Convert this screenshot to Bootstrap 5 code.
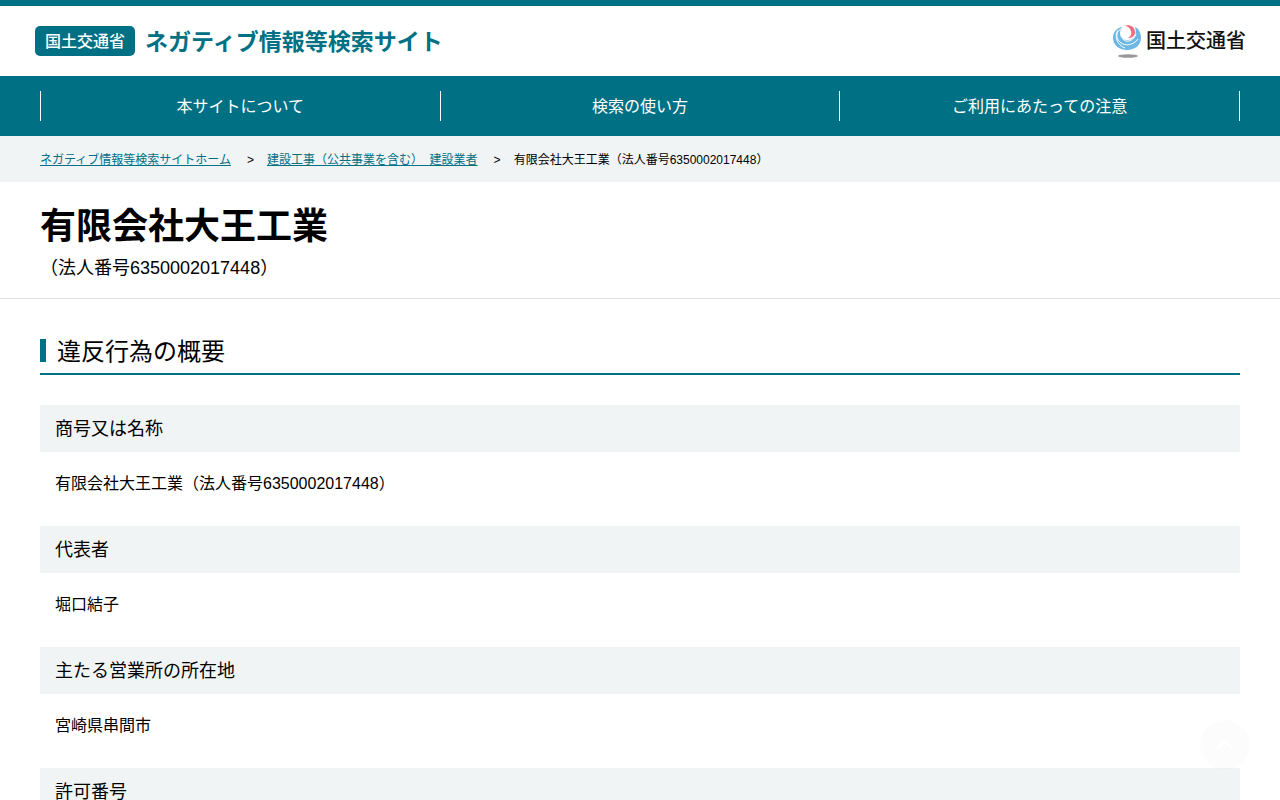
<!DOCTYPE html>
<html lang="ja">
<head>
<meta charset="utf-8">
<meta name="viewport" content="width=device-width, initial-scale=1">
<title>有限会社大王工業 | ネガティブ情報等検索サイト</title>
<link rel="stylesheet" href="https://cdn.jsdelivr.net/npm/bootstrap@5.3.0/dist/css/bootstrap.min.css">
<style>
  :root { --teal: #007085; --pale: #f0f4f5; }
  body { font-family: "Liberation Sans", "Noto Sans CJK JP", sans-serif; color: #000; background: #fff; line-height: 1.5; }
  .site-head { border-top: 6px solid var(--teal); min-height: 76px; padding: 0 35px; }
  .site-name { color: var(--teal); font-family: "Noto Sans CJK JP", sans-serif; font-size: 23px; font-weight: 700; line-height: 28px; gap: 10px; }
  .site-name:hover { color: var(--teal); }
  .site-name .title-text { padding-bottom: 3px; }
  .ministry { background: var(--teal); color: #fff; border-radius: 5px; font-size: 16px; font-weight: 500; padding: 0 10px 2px; }
  .ministry-logo { color: #111; font-family: "Noto Sans CJK JP", sans-serif; font-size: 20px; font-weight: 500; line-height: 28px; gap: 4px; margin-right: -1px; }
  .ministry-logo .logo-text { padding-bottom: 2px; }
  .page-wrap { padding-left: 40px; padding-right: 40px; }
  .site-nav { background: var(--teal); padding-top: 15px; padding-bottom: 15px; }
  .site-nav .nav-item { border-left: 1px solid #fff; }
  .site-nav .nav-item:last-child { border-right: 1px solid #fff; }
  .site-nav .nav-link { color: #fff; line-height: 28px; padding: 2px 0 0; }
  .crumbs { background: var(--pale); padding-top: 15px; padding-bottom: 13px; font-size: 12px; line-height: 18px; }
  .crumbs a { color: var(--teal); }
  .crumbs .sep { margin: 0 13px 0 16px; }
  .page-title { border-bottom: 1px solid #dde3e3; padding-top: 18px; padding-bottom: 16px; }
  .page-title h1 { font-size: 36px; font-weight: 700; line-height: 54px; }
  .page-title p { font-size: 18px; line-height: 28px; }
  .section-title { border-bottom: 2px solid var(--teal); font-size: 24px; font-weight: 400; line-height: 34px; padding: 2px 0 4px; gap: 11px; margin: 34px 0 30px; }
  .section-title::before { content: ""; width: 6px; height: 23px; background: var(--teal); margin-bottom: 3px; }
  .facts dt { background: var(--pale); font-size: 18px; font-weight: 400; line-height: 27px; padding: 11px 15px 9px; }
  .facts dd { font-size: 16px; line-height: 24px; padding: 20px 15px 0; margin-bottom: 30px; }
  .to-top { right: 30px; bottom: 30px; width: 50px; height: 50px; background: rgba(0, 0, 0, .01); }
</style>
</head>
<body>
<header>
  <div class="site-head d-flex align-items-center justify-content-between">
    <a href="#" class="site-name d-flex align-items-center text-decoration-none"><span class="ministry">国土交通省</span><span class="title-text">ネガティブ情報等検索サイト</span></a>
    <a href="#" class="ministry-logo d-flex align-items-center text-decoration-none">
      <svg width="30" height="34" viewBox="0 0 30 34" aria-hidden="true">
        <path d="M11 3C5 3 1 8 1 14C1 21 7 26 15 26C23 26 29 21 29 14C29 9 27 5 23 3C25 9 23 15 17 16C12 17 8 13 9 8C9 6 10 4 11 3Z" fill="#6db7e4"/>
        <path d="M11 4C4 6 3 14 8 18C13 23 22 21 26 15M11 3C7 7 8 13 12 16C16 19 22 16 24 10M6 6C2 12 5 21 13 24" fill="none" stroke="#fff" stroke-width="1"/>
        <path d="M12 2C18 0 23 3 23 8C23 12 20 14 16 14C19 12 20 10 19 7C18 4 16 2 12 2Z" fill="#ef6c7c"/>
        <ellipse cx="16" cy="32" rx="10" ry="1.800" fill="#999"/>
      </svg>
      <span class="logo-text">国土交通省</span>
    </a>
  </div>
  <nav class="site-nav page-wrap" aria-label="メインメニュー">
    <ul class="nav nav-justified">
      <li class="nav-item"><a class="nav-link" href="#">本サイトについて</a></li>
      <li class="nav-item"><a class="nav-link" href="#">検索の使い方</a></li>
      <li class="nav-item"><a class="nav-link" href="#">ご利用にあたっての注意</a></li>
    </ul>
  </nav>
</header>
<nav class="crumbs page-wrap" aria-label="パンくずリスト">
  <ol class="list-unstyled d-flex flex-wrap mb-0">
    <li><a href="#">ネガティブ情報等検索サイトホーム</a><span class="sep">&gt;</span></li>
    <li><a href="#">建設工事（公共事業を含む）&nbsp;&nbsp;建設業者</a><span class="sep">&gt;</span></li>
    <li aria-current="page">有限会社大王工業（法人番号6350002017448）</li>
  </ol>
</nav>
<main>
  <div class="page-title page-wrap">
    <h1 class="mb-0">有限会社大王工業</h1>
    <p class="mb-0">（法人番号6350002017448）</p>
  </div>
  <section class="page-wrap">
    <h2 class="section-title d-flex align-items-center">違反行為の概要</h2>
    <dl class="facts">
      <dt>商号又は名称</dt>
      <dd>有限会社大王工業（法人番号6350002017448）</dd>
      <dt>代表者</dt>
      <dd>堀口結子</dd>
      <dt>主たる営業所の所在地</dt>
      <dd>宮崎県串間市</dd>
      <dt>許可番号</dt>
    </dl>
  </section>
</main>
<a href="#" class="to-top position-fixed rounded-circle d-flex align-items-center justify-content-center" aria-label="ページの先頭へ">
  <svg width="18" height="10" viewBox="0 0 18 10" aria-hidden="true"><path d="M1 9L9 1L17 9" fill="none" stroke="#fff" stroke-width="2"/></svg>
</a>
<script src="https://cdn.jsdelivr.net/npm/bootstrap@5.3.0/dist/js/bootstrap.bundle.min.js"></script>
</body>
</html>
